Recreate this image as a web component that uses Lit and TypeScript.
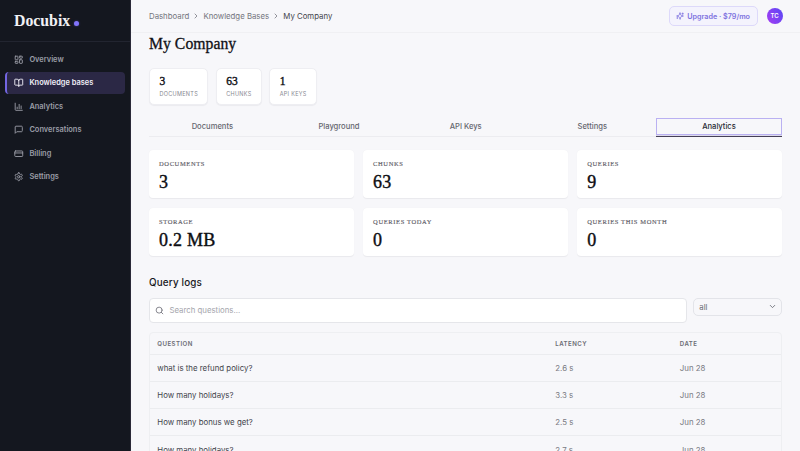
import { LitElement, html, css, svg } from 'lit';
import { customElement, property } from 'lit/decorators.js';
import { classMap } from 'lit/directives/class-map.js';

const icons: Record<string, unknown> = {
    overview: svg`<rect x="3" y="3" width="7" height="9" rx="1"/><rect x="14" y="3" width="7" height="5" rx="1"/><rect x="14" y="12" width="7" height="9" rx="1"/><rect x="3" y="16" width="7" height="5" rx="1"/>`,
    book: svg`<path d="M12 6v15M3 18a1 1 0 0 1-1-1V4a1 1 0 0 1 1-1h5a4 4 0 0 1 4 4 4 4 0 0 1 4-4h5a1 1 0 0 1 1 1v13a1 1 0 0 1-1 1h-6a3 3 0 0 0-3 3 3 3 0 0 0-3-3z"/>`,
    chart: svg`<path d="M3 3v16a2 2 0 0 0 2 2h16M8 17v-4M13 17V6M18 17v-7"/>`,
    message: svg`<path d="M21 15a2 2 0 0 1-2 2H7l-4 4V5a2 2 0 0 1 2-2h14a2 2 0 0 1 2 2z"/>`,
    card: svg`<rect x="2" y="5" width="20" height="14" rx="2"/><path d="M2 10h20"/>`,
    settings: svg`<path d="M12.22 2h-.44a2 2 0 0 0-2 2v.18a2 2 0 0 1-1 1.73l-.43.25a2 2 0 0 1-2 0l-.15-.08a2 2 0 0 0-2.73.73l-.22.38a2 2 0 0 0 .73 2.73l.15.1a2 2 0 0 1 1 1.72v.51a2 2 0 0 1-1 1.74l-.15.09a2 2 0 0 0-.73 2.73l.22.38a2 2 0 0 0 2.73.73l.15-.08a2 2 0 0 1 2 0l.43.25a2 2 0 0 1 1 1.73V20a2 2 0 0 0 2 2h.44a2 2 0 0 0 2-2v-.18a2 2 0 0 1 1-1.73l.43-.25a2 2 0 0 1 2 0l.15.08a2 2 0 0 0 2.73-.73l.22-.39a2 2 0 0 0-.73-2.73l-.15-.08a2 2 0 0 1-1-1.74v-.5a2 2 0 0 1 1-1.74l.15-.09a2 2 0 0 0 .73-2.73l-.22-.38a2 2 0 0 0-2.73-.73l-.15.08a2 2 0 0 1-2 0l-.43-.25a2 2 0 0 1-1-1.73V4a2 2 0 0 0-2-2z"/><circle cx="12" cy="12" r="3"/>`,
    sparkles: svg`<path d="M9.9 15.5A2 2 0 0 0 8.5 14l-6.1-1.5a.5.5 0 0 1 0-1L8.5 10A2 2 0 0 0 9.9 8.5l1.6-6.1a.5.5 0 0 1 1 0L14 8.5A2 2 0 0 0 15.5 10l6.1 1.5a.5.5 0 0 1 0 1L15.5 14a2 2 0 0 0-1.5 1.5l-1.5 6.1a.5.5 0 0 1-1 0zM20 3v4M22 5h-4M4 17v2M5 18H3"/>`,
    search: svg`<circle cx="11" cy="11" r="8"/><path d="m21 21-4.3-4.3"/>`,
    right: svg`<path d="m9 18 6-6-6-6"/>`,
    down: svg`<path d="m6 9 6 6 6-6"/>`,
};

@customElement('ui-icon')
export class UiIcon extends LitElement {
    @property() name = '';

    static styles = css`
        :host {
            display: block;
            flex: none;
            width: 9px;
            height: 9px;
        }

        svg {
            display: block;
            width: 100%;
            height: 100%;
            fill: none;
            stroke: currentColor;
            stroke-width: 2.3;
            stroke-linecap: round;
            stroke-linejoin: round;
        }
    `;

    render() {
        return html`<svg viewBox="0 0 24 24">${icons[this.name]}</svg>`;
    }
}

@customElement('app-sidebar')
export class AppSidebar extends LitElement {
    static styles = css`
        :host {
            display: block;
            box-sizing: border-box;
            background: #14171f;
            border-right: 1px solid #2a2938;
        }

        .logo {
            display: flex;
            align-items: center;
            box-sizing: border-box;
            height: 42px;
            padding: 1px 0 0 14px;
            border-bottom: 1px solid #222530;
            color: #f1f1f5;
            font: bold 15.8px 'Liberation Serif', serif;
        }

        .dot {
            width: 5px;
            height: 5px;
            margin: 5px 0 0 3.5px;
            border-radius: 50%;
            background: #8274fa;
            box-shadow: 0 0 2px #7c6ff088;
        }

        .nav {
            display: flex;
            flex-direction: column;
            gap: 1px;
            padding: 6px 5px;
        }

        .item {
            display: flex;
            align-items: center;
            gap: 5.5px;
            box-sizing: border-box;
            height: 22.5px;
            padding-left: 7px;
            border-left: 2px solid transparent;
            border-radius: 4px;
            color: #9b9da7;
            font-size: 7.45px;
            font-weight: 600;
            line-height: 10px;
        }

        .item ui-icon {
            width: 9.5px;
            height: 9.5px;
        }

        .label {
            padding: 1.3px 0 0 0.4px;
        }

        .active {
            border-left-color: #7366e2;
            background: #2b2845;
            color: #f0eff7;
        }
    `;

    items = [
        ['overview', 'Overview'],
        ['book', 'Knowledge bases'],
        ['chart', 'Analytics'],
        ['message', 'Conversations'],
        ['card', 'Billing'],
        ['settings', 'Settings'],
    ];

    render() {
        return html`
            <div class="logo">Docubix<span class="dot"></span></div>
            <div class="nav">
                ${this.items.map(([icon, label]) => html`
                    <div class=${classMap({ item: true, active: icon === 'book' })}>
                        <ui-icon name=${icon}></ui-icon><span class="label">${label}</span>
                    </div>
                `)}
            </div>
        `;
    }
}

@customElement('query-logs')
export class QueryLogs extends LitElement {
    static styles = css`
        :host {
            display: block;
        }

        .title {
            margin: 0;
            font-size: 9.9px;
            font-weight: 500;
            line-height: 14px;
            letter-spacing: 0.15px;
            color: #17181d;
        }

        .filters {
            display: flex;
            align-items: flex-start;
            gap: 6.5px;
            margin: 9px 0;
        }

        .search {
            flex: 1;
            display: flex;
            align-items: center;
            gap: 6px;
            box-sizing: border-box;
            height: 25px;
            padding-left: 4.5px;
            border: 1px solid #e5e6ea;
            border-radius: 4px;
            background: #fff;
            color: #a5a6ad;
            font-size: 7.8px;
            line-height: 11px;
        }

        .search ui-icon {
            color: #74757e;
        }

        .select {
            display: flex;
            align-items: center;
            justify-content: space-between;
            box-sizing: border-box;
            width: 89px;
            height: 18px;
            padding: 0 4px 0 5px;
            border: 1px solid #e3e4e9;
            border-radius: 5px;
            color: #686a73;
            font-size: 7.8px;
            line-height: 12px;
        }

        .table {
            border: 1px solid #eeeff2;
            border-radius: 4px 4px 0 0;
        }

        .row {
            display: grid;
            grid-template-columns: 398px 124.5px 1fr;
            align-items: center;
            box-sizing: border-box;
            height: 27.3px;
            padding-left: 7.3px;
            border-bottom: 1px solid #ebecef;
            color: #797a82;
            font-size: 7.85px;
        }

        .head {
            height: 22px;
            font-size: 6.1px;
            font-weight: 600;
            letter-spacing: 0.45px;
            color: #6b6c75;
        }

        .question {
            color: #42434b;
        }
    `;

    rows = [
        ['what is the refund policy?', '2.6 s', 'Jun 28'],
        ['How many holidays?', '3.3 s', 'Jun 28'],
        ['How many bonus we get?', '2.5 s', 'Jun 28'],
        ['How many holidays?', '2.7 s', 'Jun 28'],
    ];

    render() {
        return html`
            <h2 class="title">Query logs</h2>
            <div class="filters">
                <div class="search"><ui-icon name="search"></ui-icon>Search questions...</div>
                <div class="select">all<ui-icon name="down"></ui-icon></div>
            </div>
            <div class="table">
                <div class="row head"><span>QUESTION</span><span>LATENCY</span><span>DATE</span></div>
                ${this.rows.map(([question, latency, date]) => html`
                    <div class="row">
                        <span class="question">${question}</span><span>${latency}</span><span>${date}</span>
                    </div>
                `)}
            </div>
        `;
    }
}

@customElement('app-root')
export class AppRoot extends LitElement {
    static styles = css`
        :host {
            display: grid;
            grid-template-columns: 131px 1fr;
            height: 451px;
            overflow: hidden;
            background: #f7f7fa;
            font-family: Inter, sans-serif;
        }

        .main {
            min-width: 0;
            overflow: hidden;
        }

        .topbar {
            display: flex;
            align-items: center;
            box-sizing: border-box;
            height: 33px;
            padding: 0 17.5px 0 18px;
            border-bottom: 1px solid #f0f0f3;
            color: #74757d;
            font-size: 7.8px;
        }

        .crumbs {
            flex: 1;
            display: flex;
            align-items: center;
            gap: 3.1px;
        }

        .crumbs ui-icon {
            width: 8px;
            height: 8px;
        }

        .current {
            color: #43444c;
        }

        .upgrade {
            display: flex;
            align-items: center;
            gap: 3px;
            box-sizing: border-box;
            height: 20px;
            margin-right: 9px;
            padding: 0 6.5px;
            border: 1px solid #ddd9fa;
            border-radius: 5px;
            background: #f4f3fd;
            color: #7e72df;
            font-size: 7.2px;
            font-weight: 600;
        }

        .upgrade ui-icon {
            width: 8px;
            height: 8px;
        }

        .avatar {
            width: 16px;
            height: 16px;
            border-radius: 50%;
            background: linear-gradient(60deg, #a63cf2, #5847f5);
            color: #fff;
            font-size: 6px;
            font-weight: 600;
            line-height: 16px;
            text-align: center;
        }

        .content {
            padding: 0 17.7px 0 18px;
        }

        .heading {
            margin: 0;
            color: #101116;
            font: 15.7px/21px 'Liberation Serif', serif;
            letter-spacing: 0.05px;
            -webkit-text-stroke: 0.3px;
        }

        .chips {
            display: flex;
            gap: 7.5px;
            margin-top: 13.5px;
        }

        .chip {
            box-sizing: border-box;
            height: 37px;
            padding: 6px 9.2px 0 9.5px;
            border: 1px solid #eeeef2;
            border-radius: 5px;
            background: #fff;
            box-shadow: 0 1px 1px #1014200d;
        }

        .chip-value {
            color: #111217;
            font: 11.5px/13px 'Liberation Serif', serif;
            -webkit-text-stroke: 0.4px;
        }

        .chip-label {
            margin-top: 2px;
            color: #878890;
            font-size: 5.5px;
            line-height: 8px;
            letter-spacing: 0.3px;
        }

        .tabs {
            display: grid;
            grid-template-columns: repeat(5, 1fr);
            height: 18px;
            margin-top: 13px;
            border-bottom: 1px solid #ececf0;
            color: #65666f;
            font-size: 7.6px;
            font-weight: 500;
            line-height: 17px;
            text-align: center;
        }

        .tab-active {
            box-sizing: border-box;
            height: 17px;
            border: 1px solid #bab1f2;
            box-shadow: 0 1px #dcd9ec, 0 2px #454057;
            color: #292a32;
            line-height: 15px;
        }

        .cards {
            display: grid;
            grid-template-columns: repeat(3, 1fr);
            gap: 9.5px 9px;
            margin: 13px 0 18.5px;
        }

        .card {
            box-sizing: border-box;
            height: 48.5px;
            padding: 9px 10px;
            border-radius: 4px;
            background: #fff;
            box-shadow: 0 0.5px 1px #1014200f;
            font-family: 'Liberation Serif', serif;
        }

        .card-label {
            color: #5f6068;
            font-size: 6.5px;
            line-height: 9px;
            letter-spacing: 0.62px;
            -webkit-text-stroke: 0.15px;
        }

        .card-value {
            margin-top: 4px;
            color: #0d0e12;
            font-size: 18px;
            line-height: 21px;
            letter-spacing: 0.25px;
            -webkit-text-stroke: 0.4px;
        }
    `;

    chips = [['3', 'DOCUMENTS'], ['63', 'CHUNKS'], ['1', 'API KEYS']];

    tabs = ['Documents', 'Playground', 'API Keys', 'Settings', 'Analytics'];

    cards = [
        ['DOCUMENTS', '3'],
        ['CHUNKS', '63'],
        ['QUERIES', '9'],
        ['STORAGE', '0.2 MB'],
        ['QUERIES TODAY', '0'],
        ['QUERIES THIS MONTH', '0'],
    ];

    render() {
        return html`
            <app-sidebar></app-sidebar>
            <div class="main">
                <div class="topbar">
                    <div class="crumbs">
                        <span>Dashboard</span><ui-icon name="right"></ui-icon>
                        <span>Knowledge Bases</span><ui-icon name="right"></ui-icon>
                        <span class="current">My Company</span>
                    </div>
                    <div class="upgrade"><ui-icon name="sparkles"></ui-icon>Upgrade · $79/mo</div>
                    <div class="avatar">TC</div>
                </div>
                <div class="content">
                    <h1 class="heading">My Company</h1>
                    <div class="chips">
                        ${this.chips.map(([value, label]) => html`
                            <div class="chip">
                                <div class="chip-value">${value}</div>
                                <div class="chip-label">${label}</div>
                            </div>
                        `)}
                    </div>
                    <div class="tabs">
                        ${this.tabs.map((tab) => html`
                            <div class=${classMap({ 'tab-active': tab === 'Analytics' })}>${tab}</div>
                        `)}
                    </div>
                    <div class="cards">
                        ${this.cards.map(([label, value]) => html`
                            <div class="card">
                                <div class="card-label">${label}</div>
                                <div class="card-value">${value}</div>
                            </div>
                        `)}
                    </div>
                    <query-logs></query-logs>
                </div>
            </div>
        `;
    }
}
